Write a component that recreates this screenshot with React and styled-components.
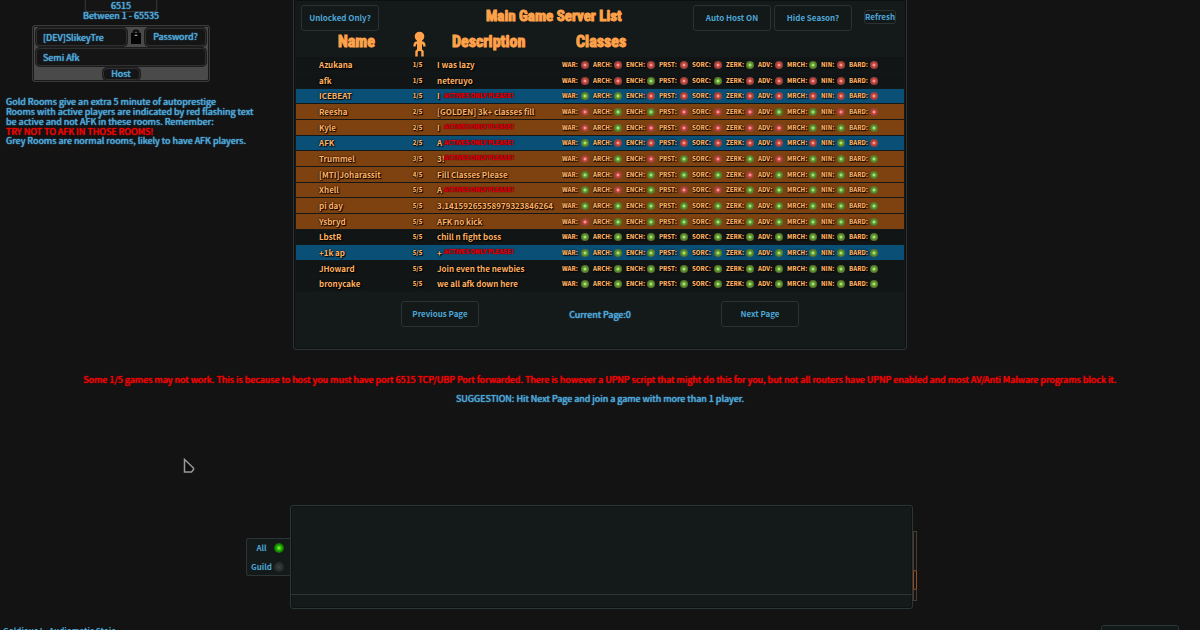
import { useState } from 'react';
import styled, { createGlobalStyle, css } from 'styled-components';

const GlobalStyle = createGlobalStyle`
  * {
    box-sizing: border-box;
  }
  body {
    margin: 0;
    background: #131313;
    color: #4da6d6;
    font-family: 'Noto Sans CJK SC', 'Noto Sans', sans-serif;
    font-size: 8px;
    font-weight: 700;
  }
  button,
  input {
    margin: 0;
    font: inherit;
    color: inherit;
    text-shadow: inherit;
  }
`;

const CLASSES = [
  { name: 'WAR', width: 31 },
  { name: 'ARCH', width: 33 },
  { name: 'ENCH', width: 33 },
  { name: 'PRST', width: 33 },
  { name: 'SORC', width: 34 },
  { name: 'ZERK', width: 32 },
  { name: 'ADV', width: 29 },
  { name: 'MRCH', width: 34 },
  { name: 'NIN', width: 28 },
  { name: 'BARD', width: 33 },
];

// open: one digit per class, 1 = filled
const ROOMS = [
  { name: 'Azukana', players: 1, text: 'I was lazy', open: '0000010100' },
  { name: 'afk', players: 1, text: 'neteruyo', open: '0010100000' },
  { name: 'ICEBEAT', players: 1, text: 'I', open: '1100000000', kind: 'blue', actives: true },
  { name: 'Reesha', players: 2, text: '[GOLDEN] 3k+ classes fill', open: '0110001100', kind: 'gold' },
  { name: 'Kyle', players: 2, text: 'I', open: '0100000111', kind: 'gold', actives: true },
  { name: 'AFK', players: 2, text: 'A', open: '1000000010', kind: 'blue', actives: true },
  { name: 'Trummel', players: 3, text: '3!', open: '0101010111', kind: 'gold', actives: true },
  { name: '[MTI]Joharassit', players: 4, text: 'Fill Classes Please', open: '1011101111', kind: 'gold' },
  { name: 'Xhell', players: 5, text: 'A', open: '1010011111', kind: 'gold', actives: true },
  { name: 'pi day', players: 5, text: '3.14159265358979323846264', open: '1111111111', kind: 'gold' },
  { name: 'Ysbryd', players: 5, text: 'AFK no kick', open: '0111111111', kind: 'gold' },
  { name: 'LbstR', players: 5, text: 'chill n fight boss', open: '1111111111' },
  { name: '+1k ap', players: 5, text: '+', open: '1111111111', kind: 'blue', actives: true },
  { name: 'JHoward', players: 5, text: 'Join even the newbies', open: '1111111111' },
  { name: 'bronycake', players: 5, text: 'we all afk down here', open: '1111111111' },
];

const ROW_COLORS = {
  blue: '#0a4f76',
  gold: '#7e4110',
};

const noteText = css`
  font-size: 9px;
  font-weight: 400;
  text-shadow: 0 0 1px currentColor, 0 0 1px currentColor;
`;

const Page = styled.div`
  position: relative;
  display: flex;
  flex-direction: column;
  height: 100vh;
  overflow: hidden;
`;

const Top = styled.div`
  display: grid;
  grid-template-columns: 293px minmax(0, 1fr) 293px;
  align-items: start;
`;

const Side = styled.aside`
  ${noteText}
  padding-left: 6px;
`;

const HostForm = styled.form`
  display: flex;
  flex-direction: column;
  align-items: center;
  width: 178px;
  margin-left: 26px;
`;

const fieldStyle = css`
  min-width: 0;
  border: 1px solid #303030;
  border-radius: 4px;
  background: #151515;
  box-shadow: 0 0 0 1px #1c1c1c;
  outline: none;
`;

const PortInput = styled.input`
  ${fieldStyle}
  width: 72px;
  height: 12px;
  padding: 0;
  border-top: none;
  border-radius: 0 0 3px 3px;
  text-align: center;
`;

const PortHint = styled.label`
  line-height: 8px;
`;

const HostBox = styled.div`
  display: flex;
  flex-direction: column;
  align-items: center;
  gap: 2px;
  width: 100%;
  margin-top: 5px;
  padding: 2px 3px 1px;
  border: 1px solid #3a3a3a;
  border-radius: 3px;
  background: #4a4a4a;
  box-shadow: inset 0 0 0 1px #1a1a1a;
`;

const HostRow = styled.div`
  display: flex;
  align-items: center;
  gap: 3px;
  width: 100%;
`;

const TextInput = styled.input`
  ${fieldStyle}
  flex: 1;
  height: 18px;
  padding: 0 6px;
`;

const DarkButton = styled.button`
  ${fieldStyle}
  width: ${({ $width }) => $width}px;
  height: ${({ $height }) => $height}px;
  padding: 0;
  line-height: 10px;
`;

const Notes = styled.div`
  margin-top: 15px;
  line-height: 9px;
  white-space: nowrap;
  p {
    margin: 0;
  }
  p:first-child {
    line-height: 10px;
  }
`;

const RedLine = styled.p`
  color: #ee0505;
`;

const ServerPanel = styled.main`
  padding: 5px 2px 22px;
  border: 1px solid #2c3436;
  border-top: none;
  border-radius: 0 0 4px 4px;
  background: #141919;
  box-shadow: inset 0 0 0 1px #0d1011;
`;

const Toolbar = styled.div`
  display: flex;
  align-items: flex-start;
  padding: 0 8px 0 5px;
`;

const ToolGroup = styled.div`
  display: flex;
  gap: 3px;
  margin-left: auto;
`;

const PanelButton = styled.button`
  width: 78px;
  height: 26px;
  padding: 0 0 1px;
  border: 1px solid #2b3234;
  border-radius: 3px;
  background: #131819;
  white-space: nowrap;
`;

const RefreshButton = styled(PanelButton)`
  width: 32px;
  height: 14px;
  margin: 5px 0 0 9px;
  padding: 0;
  line-height: 10px;
`;

const headingStyle = css`
  color: #ffa24a;
  font-family: 'Liberation Sans Narrow', 'Roboto Condensed', 'DejaVu Sans Condensed', sans-serif;
  font-size: 16px;
  font-weight: 700;
  line-height: 21px;
  -webkit-text-stroke: 1px #ffa24a;
`;

const Title = styled.h1`
  ${headingStyle}
  margin: 1px 0 0 107px;
  font-size: 15px;
  white-space: nowrap;
`;

const RoomTable = styled.table`
  width: 100%;
  table-layout: fixed;
  border-collapse: separate;
  border-spacing: 0;
  color: #ffb060;
  text-shadow: 0 0 2px #000, 1px 1px 1px #000;
  td,
  th {
    padding: 0;
  }
`;

const HeadCell = styled.th`
  ${headingStyle}
  height: 26px;
  text-align: left;
  text-shadow: none;
  vertical-align: top;
  && {
    padding-left: ${({ $indent }) => $indent}px;
  }
  svg {
    display: block;
  }
`;

const RoomRow = styled.tr`
  td {
    height: 16px;
    border-bottom: 1px solid #12171a;
    background: ${({ $kind }) => ROW_COLORS[$kind] || '#111515'};
    line-height: 10px;
    white-space: nowrap;
  }
  &:nth-child(3n) td {
    height: 15px;
  }
`;

const NameCell = styled.td`
  && {
    padding-left: 23px;
  }
`;

const CountCell = styled.td`
  font-size: 6px;
  font-weight: 900;
  text-align: center;
`;

const DescCell = styled.td`
  position: relative;
  && {
    padding-left: 7px;
  }
`;

const Actives = styled.span`
  position: absolute;
  top: 2px;
  left: 14px;
  color: #e00010;
  font-size: 6px;
  font-weight: 900;
  text-shadow: 0 0 1px #600, 1px 0 1px #400;
`;

const ClassSlot = styled.div`
  display: flex;
  align-items: center;
  justify-content: space-between;
  padding-right: 4px;
  font-size: 6px;
  font-weight: 900;
`;

const Dot = styled.span`
  width: 8px;
  height: 8px;
  border-radius: 50%;
  background: ${({ $on }) =>
    $on
      ? 'radial-gradient(circle, #b5f08a 8%, #5f9c2c 35%, #56702a 65%)'
      : 'radial-gradient(circle, #ffaaa0 8%, #c8403c 35%, #8e4238 65%)'};
`;

const Pager = styled.nav`
  display: grid;
  grid-template-columns: 78px 242px 78px;
  justify-content: center;
  align-items: center;
  margin-top: 9px;
  text-align: center;
`;

const PageLabel = styled.span`
  ${noteText}
`;

const Warning = styled.section`
  ${noteText}
  display: flex;
  flex-direction: column;
  gap: 7px;
  margin-top: 24px;
  line-height: 12px;
  text-align: center;
  p {
    margin: 0;
  }
`;

const ChatArea = styled.div`
  display: grid;
  grid-template-columns: 290px minmax(0, 1fr) 287px;
  align-items: center;
  margin-top: auto;
`;

const ChannelTabs = styled.div`
  display: flex;
  flex-direction: column;
  justify-content: space-between;
  justify-self: end;
  width: 44px;
  height: 38px;
  padding: 3px 6px 2px 2px;
  border: 1px solid #2c3436;
  border-right: none;
  border-radius: 3px 0 0 3px;
  background: #141919;
`;

const Channel = styled.label`
  display: flex;
  align-items: center;
  justify-content: space-between;
  line-height: 12px;
  span {
    flex: 1;
    text-align: center;
  }
`;

const Led = styled.input`
  appearance: none;
  width: 10px;
  height: 10px;
  border-radius: 50%;
  background: radial-gradient(circle, #3a3d3d 10%, #262a2a 60%);
  &:checked {
    background: radial-gradient(circle, #7cf03c 5%, #22b000 35%, #0c5a00 75%);
  }
`;

const ChatBox = styled.div`
  height: 104px;
  border: 1px solid #2a3638;
  border-radius: 3px;
  background: #141919;
  box-shadow: inset 0 0 0 1px #0e1213;
  display: flex;
  flex-direction: column;
`;

const ChatLog = styled.div`
  flex: 1;
  border-bottom: 1px solid #2a3638;
`;

const ChatInput = styled.input`
  height: 13px;
  padding: 0 6px;
  border: none;
  background: transparent;
  outline: none;
`;

const ScrollTrack = styled.div`
  width: 4px;
  height: 70px;
  margin-top: 18px;
  padding-top: 38px;
  border: 1px solid #4a3a30;
`;

const ScrollThumb = styled.div`
  height: 20px;
  margin: 0 -1px;
  border: 1px solid #9a4a22;
  border-radius: 2px;
`;

const Footer = styled.footer`
  display: flex;
  justify-content: space-between;
  flex-shrink: 0;
  height: 5px;
  margin-top: 16px;
  padding: 0 21px 0 3px;
  overflow: hidden;
  line-height: 12px;
`;

const FooterBox = styled.div`
  width: 78px;
  height: 20px;
  border: 1px solid #2a3638;
  border-radius: 3px;
  background: #141919;
`;

const Pointer = styled.svg`
  position: absolute;
  top: 458px;
  left: 182px;
`;

const LockIcon = () => (
  <svg width="12" height="16" viewBox="0 0 12 16" aria-hidden="true">
    <path d="M3.500 5V3.500a2.500 2 0 0 1 5 0V5" fill="none" stroke="#0a0a0a" strokeWidth="2" />
    <rect x="1" y="4" width="10" height="11" fill="#050505" />
    <path d="M4 7l2-2 2 2z" fill="#888" />
  </svg>
);

const PersonIcon = () => (
  <svg width="13" height="26" viewBox="0 0 13 26" role="img" aria-label="Players">
    <circle cx="6.5" cy="5.500" r="4.800" fill="#ffa24a" />
    <path
      d="M4.500 11.500C2.500 11.500 1.500 13 1.500 15.500M8.500 11.500C10.500 11.500 11.500 13 11.500 15.500M3.500 25.500v-5l3-3 3 3v5"
      fill="none"
      stroke="#ffa24a"
      strokeWidth="2.400"
    />
    <path d="M4 9h5v9H4z" fill="#ffa24a" />
  </svg>
);

const HostPanel = () => (
  <HostForm onSubmit={(e) => e.preventDefault()}>
    <PortInput id="port" defaultValue="6515" />
    <PortHint htmlFor="port">Between 1 - 65535</PortHint>
    <HostBox>
      <HostRow>
        <TextInput aria-label="Room name" defaultValue="[DEV]SlikeyTre" />
        <LockIcon />
        <DarkButton type="button" $width={61} $height={18}>
          Password?
        </DarkButton>
      </HostRow>
      <HostRow>
        <TextInput aria-label="Description" defaultValue="Semi Afk" />
      </HostRow>
      <DarkButton type="submit" $width={37} $height={12}>
        Host
      </DarkButton>
    </HostBox>
  </HostForm>
);

const Room = ({ room }) => (
  <RoomRow $kind={room.kind}>
    <NameCell>{room.name}</NameCell>
    <CountCell>{room.players}/5</CountCell>
    <DescCell>
      {room.text}
      {room.actives && <Actives>ACTIVES ONLY PLEASE!</Actives>}
    </DescCell>
    {CLASSES.map((c, i) => (
      <td key={c.name}>
        <ClassSlot>
          {c.name}:
          <Dot $on={room.open[i] === '1'} />
        </ClassSlot>
      </td>
    ))}
    <td />
  </RoomRow>
);

const App = () => {
  const [channels, setChannels] = useState({ All: true, Guild: false });
  const onToggle = (name) => {
    setChannels({ ...channels, [name]: !channels[name] });
  };

  return (
    <>
      <GlobalStyle />
      <Page>
        <Top>
          <Side>
            <HostPanel />
            <Notes>
              <p>
                Gold Rooms give an extra 5 minute of autoprestige
                <br />
                Rooms with active players are indicated by red flashing text
                <br />
                be active and not AFK in these rooms. Remember:
              </p>
              <RedLine>TRY NOT TO AFK IN THOSE ROOMS!</RedLine>
              <p>Grey Rooms are normal rooms, likely to have AFK players.</p>
            </Notes>
          </Side>
          <ServerPanel>
            <Toolbar>
              <PanelButton>Unlocked Only?</PanelButton>
              <Title>Main Game Server List</Title>
              <ToolGroup>
                <PanelButton>Auto Host ON</PanelButton>
                <PanelButton>Hide Season?</PanelButton>
                <RefreshButton>Refresh</RefreshButton>
              </ToolGroup>
            </Toolbar>
            <RoomTable>
              <colgroup>
                <col width="109" />
                <col width="25" />
                <col width="132" />
                {CLASSES.map((c) => (
                  <col key={c.name} width={c.width} />
                ))}
                <col />
              </colgroup>
              <thead>
                <tr>
                  <HeadCell $indent={42}>Name</HeadCell>
                  <HeadCell $indent={8}>
                    <PersonIcon />
                  </HeadCell>
                  <HeadCell $indent={22}>Description</HeadCell>
                  <HeadCell $indent={14} colSpan={11}>
                    Classes
                  </HeadCell>
                </tr>
              </thead>
              <tbody>
                {ROOMS.map((room) => (
                  <Room key={room.name} room={room} />
                ))}
              </tbody>
            </RoomTable>
            <Pager>
              <PanelButton>Previous Page</PanelButton>
              <PageLabel>Current Page:0</PageLabel>
              <PanelButton>Next Page</PanelButton>
            </Pager>
          </ServerPanel>
        </Top>
        <Warning>
          <RedLine>
            Some 1/5 games may not work. This is because to host you must have port 6515 TCP/UBP Port forwarded. There is
            however a UPNP script that might do this for you, but not all routers have UPNP enabled and most AV/Anti
            Malware programs block it.
          </RedLine>
          <p>SUGGESTION: Hit Next Page and join a game with more than 1 player.</p>
        </Warning>
        <ChatArea>
          <ChannelTabs>
            {Object.keys(channels).map((name) => (
              <Channel key={name}>
                <span>{name}</span>
                <Led type="checkbox" checked={channels[name]} onChange={() => onToggle(name)} />
              </Channel>
            ))}
          </ChannelTabs>
          <ChatBox>
            <ChatLog />
            <ChatInput aria-label="Chat message" />
          </ChatBox>
          <ScrollTrack>
            <ScrollThumb />
          </ScrollTrack>
        </ChatArea>
        <Footer>
          <span>Goldious I - Audiomatic Stoic</span>
          <FooterBox />
        </Footer>
        <Pointer width="14" height="16" viewBox="0 0 14 16" aria-hidden="true">
          <path d="M2.500 1.500v12.500h7l2-2.500v-1.500z" fill="#0c0c0c" stroke="#999" strokeWidth="1.500" />
        </Pointer>
      </Page>
    </>
  );
};

export default App;
